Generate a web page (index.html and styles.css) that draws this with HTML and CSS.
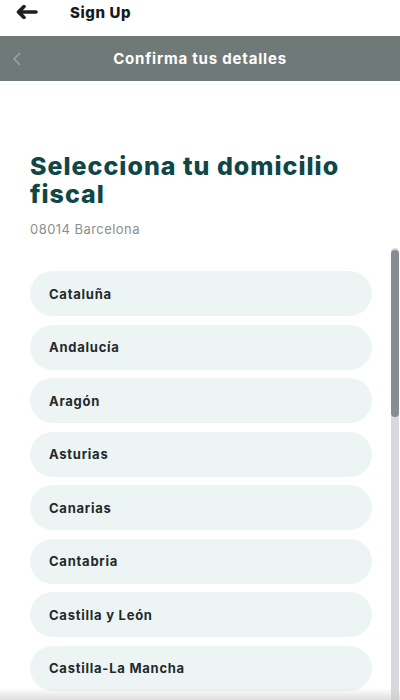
FILE: index.html
```html
<!DOCTYPE html>
<html>
<head>
<meta charset="utf-8">
<title>Sign Up</title>
<link rel="stylesheet" href="styles.css">
</head>
<body>
  <div class="topbar">
    <svg class="back" width="22" height="14" viewBox="0 0 22 14">
      <path d="M8 1.5 L2.5 7 L8 12.5 M2.5 7 H20" fill="none" stroke="#1b1f24" stroke-width="3.6" stroke-linecap="round" stroke-linejoin="round"/>
    </svg>
    <span class="topbar-title">Sign Up</span>
  </div>

  <div class="header">
    <svg class="chev" width="10" height="16" viewBox="0 0 10 16">
      <path d="M8 2 L2 8 L8 14" fill="none" stroke="#9aa3a1" stroke-width="1.6"/>
    </svg>
    <span class="header-title">Confirma tus detalles</span>
  </div>

  <div class="content">
    <h1 class="heading">Selecciona tu domicilio fiscal</h1>
    <p class="sub">08014 Barcelona</p>

    <ul class="list">
      <li class="item">Cataluña</li>
      <li class="item">Andalucía</li>
      <li class="item">Aragón</li>
      <li class="item">Asturias</li>
      <li class="item">Canarias</li>
      <li class="item">Cantabria</li>
      <li class="item">Castilla y León</li>
      <li class="item">Castilla-La Mancha</li>
    </ul>
  </div>

  <div class="scrollbar"><div class="thumb"></div></div>
  <div class="fade"></div>
</body>
</html>
```

FILE: styles.css
```css
* {
    margin: 0;
    padding: 0;
    box-sizing: border-box;
}

html, body {
    height: 700px;
    overflow: hidden;
}

body {
    font-family: Inter, "Noto Sans", sans-serif;
    background: #ffffff;
    position: relative;
}

.topbar {
    height: 36px;
    display: flex;
    align-items: center;
    padding-left: 16px;
    background: #fff;
}

.back {
    display: block;
    margin-top: -12px;
}

.topbar-title {
    margin-left: 32px;
    margin-top: -12px;
    font-size: 15px;
    font-weight: 800;
    letter-spacing: 0.6px;
    color: #15191d;
}

.header {
    height: 45px;
    background: #6f7a78;
    display: flex;
    align-items: center;
    justify-content: center;
    position: relative;
}

.chev {
    position: absolute;
    left: 12px;
    top: 15px;
}

.header-title {
    color: #fff;
    font-size: 15px;
    font-weight: 700;
    letter-spacing: 0.8px;
}

.content {
    padding: 71px 28px 0 30px;
}

.heading {
    font-size: 25px;
    line-height: 28px;
    font-weight: 800;
    color: #0f4646;
    letter-spacing: 1px;
}

.sub {
    margin-top: 13px;
    font-size: 13px;
    letter-spacing: 0.45px;
    color: #8a8f8f;
}

.list {
    list-style: none;
    margin-top: 34px;
    display: flex;
    flex-direction: column;
    gap: 8.5px;
}

.item {
    height: 45px;
    border-radius: 23px;
    background: #edf4f4;
    display: flex;
    align-items: center;
    padding-left: 19px;
    font-size: 13px;
    font-weight: 700;
    letter-spacing: 0.75px;
    color: #24292b;
}

.scrollbar {
    position: absolute;
    right: 1px;
    top: 248px;
    width: 8px;
    height: 452px;
    background: #d7d9dc;
    border-radius: 4px 4px 0 0;
}

.thumb {
    height: 167px;
    margin-top: 2px;
    background: #868c93;
    border-radius: 4px;
}

.fade {
    position: absolute;
    left: 0;
    right: 0;
    bottom: 0;
    height: 12px;
    background: linear-gradient(to bottom, rgba(200,200,200,0), rgba(200,200,200,0.6));
}
```
